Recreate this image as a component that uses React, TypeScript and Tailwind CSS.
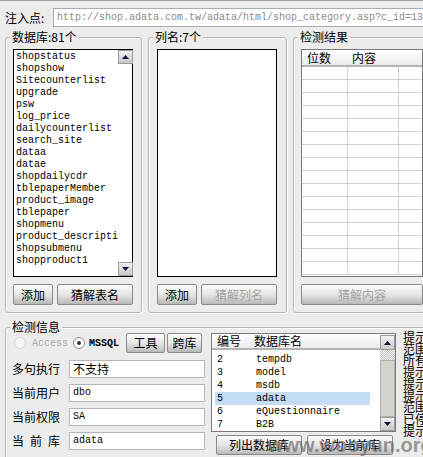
import type { ReactNode } from 'react'

const mono = "font-['Liberation_Mono',monospace]"

function GroupBox({
  label,
  className,
  children,
}: {
  label: string
  className: string
  children: ReactNode
}) {
  return (
    <div
      className={`relative shrink-0 rounded-[3px] border border-[#b6b6b6] shadow-[inset_1px_1px_0_#fff,1px_1px_0_#fff] ${className}`}
    >
      <span className="absolute left-[4px] top-[-9px] bg-[#ececec] px-[2px] leading-[16px]">
        {label}
      </span>
      {children}
    </div>
  )
}

function Btn({
  children,
  className,
  disabled,
}: {
  children: ReactNode
  className: string
  disabled?: boolean
}) {
  return (
    <button
      className={`shrink-0 rounded-[2px] border border-[#8a8a8a] bg-linear-to-b from-[#fbfbfb] via-[#e6e6e6] to-[#b9b9b9] text-[12px] leading-none ${
        disabled ? 'text-[#a3a3a3]' : 'text-black'
      } ${className}`}
    >
      {children}
    </button>
  )
}

function Arrow({ up, className }: { up?: boolean; className: string }) {
  return (
    <div
      className={`flex items-center justify-center border border-[#9c9c9c] bg-linear-to-b from-[#f2f2f2] to-[#c9c9c9] ${className}`}
    >
      <svg width="7" height="4" viewBox="0 0 7 4">
        <path d={up ? 'M0 4L3.5 0L7 4Z' : 'M0 0L3.5 4L7 0Z'} fill="#0b1638" />
      </svg>
    </div>
  )
}

const tables = [
  'shopstatus',
  'shopshow',
  'Sitecounterlist',
  'upgrade',
  'psw',
  'log_price',
  'dailycounterlist',
  'search_site',
  'dataa',
  'datae',
  'shopdailycdr',
  'tblepaperMember',
  'product_image',
  'tblepaper',
  'shopmenu',
  'product_descripti',
  'shopsubmenu',
  'shopproduct1',
]

const dbs = [
  ['2', 'tempdb'],
  ['3', 'model'],
  ['4', 'msdb'],
  ['5', 'adata'],
  ['6', 'eQuestionnaire'],
  ['7', 'B2B'],
]

const hints = ['提示信息', '范围内容', '所有数据', '提示信息', '提示信息', '提示信息', '范围内容', '已停止', '提示信息']

export default function App() {
  return (
    <div className="relative h-[457px] w-[423px] overflow-hidden border-t border-[#a0a0a0] bg-[#ececec] font-['Noto_Sans_CJK_SC',sans-serif] text-[12px] text-black">
      {/* 注入点 */}
      <div className="flex items-center pl-[5px] pt-[7px]">
        <span className="w-[48px] shrink-0 leading-[19px]">注入点:</span>
        <div
          className={`h-[19px] w-[380px] shrink-0 overflow-hidden whitespace-nowrap border border-[#a8aeb6] bg-white pl-[3px] text-[10px] leading-[17px] text-[#8a8a8a] ${mono}`}
        >
          http://shop.adata.com.tw/adata/html/shop_category.asp?c_id=13
        </div>
      </div>

      {/* 三个面板 */}
      <div className="mt-[10px] flex pl-[5px]">
        <GroupBox label="数据库:81个" className="h-[276px] w-[137px] pl-[7px] pt-[11px]">
          <div className="flex h-[228px] w-[120px] border border-black bg-white">
            <div className={`flex-1 pl-[2px] pt-[1px] text-[10px] leading-[12px] ${mono}`}>
              {tables.map((t) => (
                <div key={t} className="whitespace-nowrap">
                  {t}
                </div>
              ))}
            </div>
            <div className="flex w-[16px] flex-col justify-between pb-[0px] pr-[1px] pt-[0px]">
              <Arrow up className="h-[14px] w-[15px]" />
              <Arrow className="h-[14px] w-[15px]" />
            </div>
          </div>
          <div className="mt-[7px] flex gap-[4px]">
            <Btn className="h-[21px] w-[40px]">添加</Btn>
            <Btn className="h-[21px] w-[76px]">猜解表名</Btn>
          </div>
        </GroupBox>

        <GroupBox label="列名:7个" className="ml-[6px] h-[276px] w-[139px] pl-[8px] pt-[11px]">
          <div className="h-[228px] w-[120px] border border-black bg-white" />
          <div className="mt-[7px] flex gap-[4px]">
            <Btn className="h-[21px] w-[40px]">添加</Btn>
            <Btn disabled className="h-[21px] w-[76px]">
              猜解列名
            </Btn>
          </div>
        </GroupBox>

        <GroupBox label="检测结果" className="ml-[6px] h-[276px] w-[140px] pl-[7px] pt-[11px]">
          <div className="h-[228px] w-[122px] overflow-hidden border border-[#7a7a7a] bg-white">
            <div className="flex h-[17px] items-center border-b-2 border-[#b4b4b4] bg-linear-to-b from-white to-[#ebebeb] pl-[5px] leading-none">
              <span className="w-[45px]">位数</span>
              <span>内容</span>
            </div>
            {Array.from({ length: 16 }).map((_, i) => (
              <div key={i} className="flex h-[13px] border-b border-[#d6d3ce]">
                <div className="w-[46px] border-r border-[#d6d3ce]" />
                <div className="w-[51px] border-r border-[#d6d3ce]" />
              </div>
            ))}
          </div>
          <div className="mt-[7px] flex">
            <Btn disabled className="h-[21px] w-[122px]">
              猜解内容
            </Btn>
          </div>
        </GroupBox>
      </div>

      {/* 检测信息 */}
      <div className="mt-[14px] pl-[5px]">
        <GroupBox label="检测信息" className="flex h-[150px] w-[440px] pl-[6px] pt-[5px]">
          <div className="w-[194px] shrink-0">
            <div className="flex h-[20px] items-center">
              <span className="ml-[2px] h-[12px] w-[12px] shrink-0 rounded-full border border-[#d6d6d6] bg-[#f6f6f6]" />
              <span className={`ml-[6px] text-[10px] text-[#ababab] ${mono}`}>Access</span>
              <span className="ml-[5px] flex h-[12px] w-[12px] shrink-0 items-center justify-center rounded-full border border-[#8a8a8a] bg-white">
                <span className="h-[4px] w-[4px] rounded-full bg-[#333]" />
              </span>
              <span className={`ml-[4px] text-[10px] font-bold ${mono}`}>MSSQL</span>
              <Btn className="ml-[7px] h-[20px] w-[39px]">工具</Btn>
              <Btn className="ml-[2px] h-[20px] w-[35px]">跨库</Btn>
            </div>
            <div className="mt-[7px] flex flex-col gap-[6px]">
              {[
                ['多句执行', '不支持', false],
                ['当前用户', 'dbo', true],
                ['当前权限', 'SA', true],
                ['当 前 库', 'adata', true],
              ].map(([label, value, isMono]) => (
                <div key={label as string} className="flex items-center">
                  {label === '当 前 库' ? (
                    <span className="flex w-[48px] justify-between">
                      <span>当</span>
                      <span>前</span>
                      <span>库</span>
                    </span>
                  ) : (
                    <span className="w-[48px] whitespace-nowrap">{label}</span>
                  )}
                  <div
                    className={`ml-[9px] h-[18px] w-[136px] border border-[#b3b7bd] bg-white pl-[3px] ${
                      isMono ? `text-[10px] leading-[16px] ${mono}` : 'leading-[16px]'
                    }`}
                  >
                    {value}
                  </div>
                </div>
              ))}
            </div>
          </div>

          <div className="ml-[5px] w-[185px] shrink-0">
            <div className="flex h-[99px] border border-[#7a7a7a] bg-white">
              <div className="flex-1">
                <div className="flex h-[16px] items-center border-b-2 border-[#b4b4b4] bg-linear-to-b from-white to-[#ebebeb] pl-[5px] leading-none">
                  <span className="w-[37px]">编号</span>
                  <span>数据库名</span>
                </div>
                <div className={`ml-[3px] w-[155px] pt-[3px] text-[10px] leading-none ${mono}`}>
                  {dbs.map(([n, name]) => (
                    <div
                      key={n}
                      className={`flex h-[13px] items-center ${n === '5' ? 'bg-[#c4ddf6]' : ''}`}
                    >
                      <span className="w-[41px] pl-[2px]">{n}</span>
                      <span>{name}</span>
                    </div>
                  ))}
                </div>
              </div>
              <div className="flex w-[15px] flex-col pt-[1px]">
                <Arrow up className="h-[15px] w-[15px]" />
                <div className="h-[10px] bg-[repeating-conic-gradient(#c4c4c4_0_25%,#f4f4f4_0_50%)] bg-[length:2px_2px]" />
                <div className="flex-1 border border-[#b0b0b0] bg-[#d6d3ce]" />
                <Arrow className="h-[14px] w-[15px]" />
              </div>
            </div>
            <div className="mt-[3px] flex gap-[5px] pl-[5px]">
              <Btn className="h-[20px] w-[86px]">列出数据库</Btn>
              <Btn className="h-[20px] w-[86px]">设为当前库</Btn>
            </div>
          </div>

          <div className="ml-[7px] mt-[-2px] flex flex-col whitespace-nowrap leading-[11.7px]">
            {hints.map((h, i) => (
              <span key={i}>{h}</span>
            ))}
          </div>
        </GroupBox>
      </div>

      {/* 水印 */}
      <span className="absolute left-[268px] top-[434px] font-['Liberation_Sans',sans-serif] text-[20px] font-bold leading-none text-[#6e6e6e]/70">
        www.wooyun.org
      </span>
    </div>
  )
}
